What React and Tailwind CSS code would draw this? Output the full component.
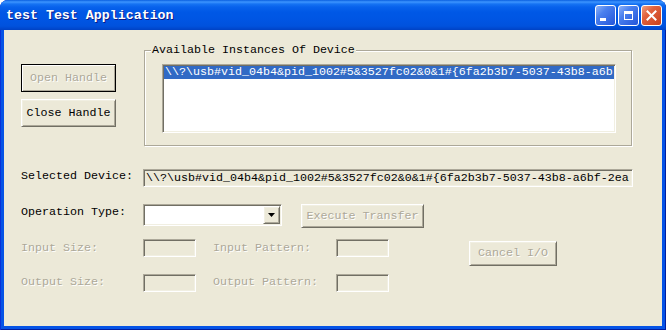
import React from 'react';

const raised =
  'border border-t-white border-l-white border-r-[#716F64] border-b-[#716F64] shadow-[inset_1px_1px_0_#F1EFE2,inset_-1px_-1px_0_#ACA899] bg-[#ECE9D8]';
const sunken =
  'border border-t-[#ACA899] border-l-[#ACA899] border-r-white border-b-white shadow-[inset_1px_1px_0_#716F64,inset_-1px_-1px_0_#F1EFE2]';
const dim = 'text-[#ACA899] [text-shadow:1px_1px_0_#fff]';

// only the part of the device path that fits in each box
const DEVICE_LIST = '\\\\?\\usb#vid_04b4&pid_1002#5&3527fc02&0&1#{6fa2b3b7-5037-43b8-a6b';
const DEVICE_SEL = '\\\\?\\usb#vid_04b4&pid_1002#5&3527fc02&0&1#{6fa2b3b7-5037-43b8-a6bf-2ea';

function CaptionButton({ kind }) {
  if (kind === 'close') {
    return (
      <div className="w-[21px] h-[21px] rounded-[3px] border border-white bg-[linear-gradient(135deg,#F0A080_0%,#E2623E_35%,#C8401C_100%)] flex items-center justify-center">
        <svg width="11" height="11" viewBox="0 0 11 11">
          <path d="M1.5 1.5 L9.5 9.5 M9.5 1.5 L1.5 9.5" stroke="#fff" strokeWidth="2" strokeLinecap="square" />
        </svg>
      </div>
    );
  }
  return (
    <div className="w-[21px] h-[21px] rounded-[3px] border border-white bg-[linear-gradient(135deg,#8DB2F8_0%,#4A80EE_35%,#2355DA_100%)] flex">
      {kind === 'min' ? (
        <div className="self-end ml-[4px] mb-[4px] w-[6px] h-[3px] bg-white" />
      ) : (
        <div className="m-auto w-[9px] h-[9px] border border-white border-t-[3px]" />
      )}
    </div>
  );
}

function Button({ children, disabled, isDefault, className }) {
  const frame = isDefault
    ? 'border border-black shadow-[inset_1px_1px_0_#fff,inset_-1px_-1px_0_#ACA899] bg-[#ECE9D8]'
    : raised;
  return (
    <div className={`${frame} ${disabled ? dim : 'text-black'} flex items-center justify-center whitespace-nowrap ${className}`}>
      {children}
    </div>
  );
}

export default function App() {
  return (
    <div className="w-[666px] h-[330px] bg-white font-['Liberation_Mono','Courier_New',monospace] text-[11.67px] leading-[13px]">
      <div className="w-full h-full rounded-t-[8px] overflow-hidden bg-[#0553E6] flex flex-col shadow-[inset_1px_0_0_#0831D9,inset_-1px_-1px_0_#001DA0]">
        {/* caption */}
        <div className="h-[30px] shrink-0 flex items-start pl-[6px] pr-[4px] bg-[linear-gradient(to_bottom,#0A5FE0_0px,#3D95FF_2px,#1673F3_4px,#0862EC_7px,#0058E6_12px,#0055E3_20px,#0052DD_26px,#0046CC_29px,#0042C2_30px)]">
          <span className="flex-1 mt-[8px] text-white font-bold text-[13.3px] leading-[15px] [text-shadow:1px_1px_0_#0A1883]">
            test Test Application
          </span>
          <div className="flex gap-[2px] mt-[5px]">
            <CaptionButton kind="min" />
            <CaptionButton kind="max" />
            <CaptionButton kind="close" />
          </div>
        </div>

        {/* client */}
        <div className="flex-1 mx-[4px] mb-[4px] bg-[#ECE9D8] flex flex-col pl-[17px]">
          <div className="flex items-start">
            <div className="flex flex-col gap-[7px] mt-[34px]">
              <Button isDefault disabled className="w-[95px] h-[28px]">Open Handle</Button>
              <Button className="w-[95px] h-[28px]">Close Handle</Button>
            </div>
            <div className="relative ml-[28px] mt-[20px] w-[488px] border border-[#ACA899] shadow-[inset_1px_1px_0_#fff,1px_1px_0_#fff] pl-[17px] pr-[15px] pt-[13px] pb-[12px]">
              <span className="absolute left-[6px] -top-[7px] bg-[#ECE9D8] px-[1px] text-black">
                Available Instances Of Device
              </span>
              <div className={`${sunken} w-[454px] h-[69px] bg-white p-px`}>
                <div className="h-[13px] bg-[#316AC5] text-white pl-[1px] whitespace-nowrap">
                  {DEVICE_LIST}
                </div>
              </div>
            </div>
          </div>

          <div className="flex items-start mt-[23px]">
            <span className="w-[122px] mt-[1px] text-black">Selected Device:</span>
            <div className={`${sunken} w-[490px] h-[18px] bg-[#ECE9D8] px-[2px] leading-[16px] whitespace-nowrap text-black`}>
              {DEVICE_SEL}
            </div>
          </div>

          <div className="flex items-start mt-[17px]">
            <span className="w-[122px] mt-[2px] text-black">Operation Type:</span>
            <div className={`${sunken} w-[139px] h-[22px] bg-white p-px flex justify-end`}>
              <div className={`${raised} w-[17px] h-full flex items-center justify-center`}>
                <svg width="7" height="4" viewBox="0 0 7 4">
                  <path d="M0 0 H7 L3.5 4 Z" fill="#000" />
                </svg>
              </div>
            </div>
            <Button disabled className="ml-[19px] w-[123px] h-[24px]">Execute Transfer</Button>
          </div>

          <div className="flex items-start mt-[11px]">
            <div className="flex flex-col gap-[17px]">
              <div className="flex items-start">
                <span className={`w-[122px] mt-[3px] ${dim}`}>Input Size:</span>
                <div className={`${sunken} w-[53px] h-[18px]`} />
                <span className={`ml-[17px] w-[123px] mt-[3px] ${dim}`}>Input Pattern:</span>
                <div className={`${sunken} w-[53px] h-[18px]`} />
              </div>
              <div className="flex items-start">
                <span className={`w-[122px] mt-[2px] ${dim}`}>Output Size:</span>
                <div className={`${sunken} w-[53px] h-[18px]`} />
                <span className={`ml-[17px] w-[123px] mt-[2px] ${dim}`}>Output Pattern:</span>
                <div className={`${sunken} w-[53px] h-[18px]`} />
              </div>
            </div>
            <Button disabled className="ml-[80px] mt-[2px] w-[88px] h-[25px]">Cancel I/O</Button>
          </div>
        </div>
      </div>
    </div>
  );
}
